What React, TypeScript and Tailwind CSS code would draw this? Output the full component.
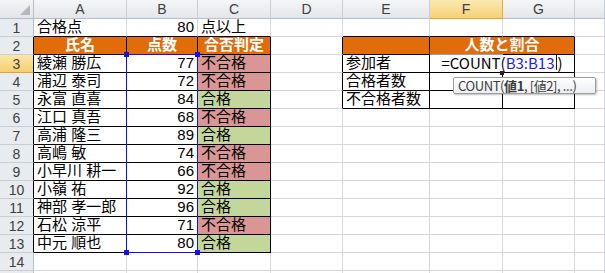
import React from 'react';
import clsx from 'clsx';

type C = {
  t?: React.ReactNode;
  a?: 'l' | 'r' | 'c';
  bg?: string;
  r?: boolean;
  b?: boolean;
  h?: boolean;
  span?: boolean;
};

const ORANGE = 'bg-[#e26b0a]';
const RED = 'bg-[#da9694]';
const GREEN = 'bg-[#c4d79b]';

const people: [string, number][] = [
  ['綾瀬 勝広', 77],
  ['浦辺 泰司', 72],
  ['永富 直喜', 84],
  ['江口 真吾', 68],
  ['高浦 隆三', 89],
  ['高嶋 敏', 74],
  ['小早川 耕一', 66],
  ['小嶺 祐', 92],
  ['神部 孝一郎', 96],
  ['石松 涼平', 71],
  ['中元 順也', 80],
];

const summary = ['参加者', '合格者数', '不合格者数'];

const EditText = (
  <span className="flex items-end font-['Noto_Sans_CJK_JP',sans-serif]">
    <span>=COUNT(</span>
    <span className="text-[#1a1aff]">B3:B13</span>
    <span className="mx-px mb-[1px] h-[15px] w-px bg-[#222]" />
    <span>)</span>
  </span>
);

function buildRows(): C[][] {
  const rows: C[][] = [];
  rows.push([
    { t: '合格点', b: true },
    { t: '80', a: 'r', b: true },
    { t: '点以上', b: true },
    {},
    { b: true },
    { b: true },
    { b: true },
    {},
  ]);
  rows.push([
    { t: '氏名', a: 'c', bg: ORANGE, h: true, r: true, b: true },
    { t: '点数', a: 'c', bg: ORANGE, h: true, r: true, b: true },
    { t: '合否判定', a: 'c', bg: ORANGE, h: true, r: true, b: true },
    { r: true },
    { bg: ORANGE, r: true, b: true },
    { t: '人数と割合', a: 'c', bg: ORANGE, h: true, r: true, b: true, span: true },
    {},
  ]);
  people.forEach(([name, score], i) => {
    const pass = score >= 80;
    const row: C[] = [
      { t: name, r: true, b: true },
      { t: String(score), a: 'r', r: true, b: true },
      { t: pass ? '合格' : '不合格', bg: pass ? GREEN : RED, r: true, b: true },
    ];
    if (i === 0) {
      row.push({ r: true }, { t: summary[0], r: true, b: true }, { t: EditText, a: 'c', r: true, b: true, span: true }, {});
    } else if (i < 3) {
      row.push({ r: true }, { t: summary[i], r: true, b: true }, { r: true, b: true }, { r: true, b: true }, {});
    } else {
      row.push({}, {}, {}, {}, {});
    }
    rows.push(row);
  });
  rows.push([{}, {}, {}, {}, {}, {}, {}, {}]);
  rows.push([{}, {}, {}, {}, {}, {}, {}, {}]);
  return rows;
}

function Cell({ c }: { c: C }) {
  return (
    <div
      className={clsx(
        'flex items-end overflow-visible whitespace-nowrap border-r border-b px-[3px] pb-[1px] text-[15px] leading-[16px]',
        c.r ? 'border-r-black' : 'border-r-[#d4d8df]',
        c.b ? 'border-b-black' : 'border-b-[#d4d8df]',
        c.a === 'r' && 'justify-end',
        c.a === 'c' && 'justify-center',
        c.h ? 'font-bold text-white' : 'text-black',
        c.span && 'col-span-2',
        c.bg ?? 'bg-white'
      )}
    >
      {c.t}
    </div>
  );
}

const colNames = ['A', 'B', 'C', 'D', 'E', 'F', 'G', ''];

export default function App() {
  const rows = buildRows();
  return (
    <div className="relative h-[273px] w-[605px] overflow-hidden bg-white font-['Liberation_Sans','Noto_Sans_CJK_JP',sans-serif]">
      <div className="grid grid-cols-[34px_93px_71px_73px_72px_87px_73px_72px_1fr] grid-rows-[19px] auto-rows-[18px]">
        {/* corner */}
        <div className="relative border-r border-b border-r-[#b9bec6] border-b-[#b9bec6] bg-linear-to-b from-[#f3f4f6] to-[#e2e5e9]">
          <svg className="absolute right-[3px] bottom-[3px]" width="10" height="10" viewBox="0 0 10 10">
            <polygon points="10,0 10,10 0,10" fill="#b5b9bf" />
          </svg>
        </div>
        {colNames.map((n, i) => (
          <div
            key={n + i}
            className={clsx(
              'flex items-center justify-center border-r border-b text-[14px] text-[#3f3f3f]',
              n === 'F'
                ? 'border-r-[#e4ab3d] border-b-[#e4a232] bg-linear-to-b from-[#fbe9b2] to-[#f6d172]'
                : 'border-r-[#c9ced5] border-b-[#b9bec6] bg-linear-to-b from-[#f5f6f8] to-[#e3e6ea]'
            )}
          >
            {n}
          </div>
        ))}
        {rows.map((row, ri) => (
          <React.Fragment key={ri}>
            <div
              className={clsx(
                'flex items-center justify-center border-r border-b pt-[1px] text-[14px] text-[#3f3f3f]',
                ri >= 1 && ri <= 12 ? 'border-r-black' : 'border-r-[#b9bec6]',
                ri === 2
                  ? 'border-b-[#e4a232] bg-linear-to-b from-[#fbe6a8] to-[#f6cf6e]'
                  : 'border-b-[#c9ced5] bg-[#e8ebef]'
              )}
            >
              {ri < 14 ? ri + 1 : ''}
            </div>
            {row.map((c, ci) => (
              <Cell key={ci} c={c} />
            ))}
          </React.Fragment>
        ))}
      </div>

      {/* range reference highlight B3:B13 with corner handles */}
      <div className="pointer-events-none absolute top-[54px] left-[126px] h-[199px] w-[72px] border border-[#1010ff]">
        <div className="absolute -top-[3px] -left-[3px] h-[5px] w-[5px] bg-[#1010ff]" />
        <div className="absolute -top-[3px] -right-[3px] h-[5px] w-[5px] bg-[#1010ff]" />
        <div className="absolute -bottom-[3px] -left-[3px] h-[5px] w-[5px] bg-[#1010ff]" />
        <div className="absolute -right-[3px] -bottom-[3px] h-[5px] w-[5px] bg-[#1010ff]" />
      </div>

      {/* active cell marks */}
      <div className="absolute top-[54px] left-[430px] h-px w-[73px] bg-[#7fa6d8]" />
      <div className="absolute top-[71px] left-[500px] h-[4px] w-[4px] bg-[#222]" />

      {/* function tooltip */}
      <div className="absolute top-[77px] left-[453px] flex h-[17px] w-[143px] items-center whitespace-nowrap rounded-[2px] border border-[#9c9c9c] bg-linear-to-b from-white to-[#eceef2] pl-[4px] text-[13px] leading-none tracking-[-0.4px] text-[#3c3c3c] shadow-[1px_1px_2px_rgba(0,0,0,0.25)] font-['Noto_Sans_CJK_JP',sans-serif]">
        COUNT(<span className="font-bold">値1</span>, [値2], ...)
      </div>
    </div>
  );
}
